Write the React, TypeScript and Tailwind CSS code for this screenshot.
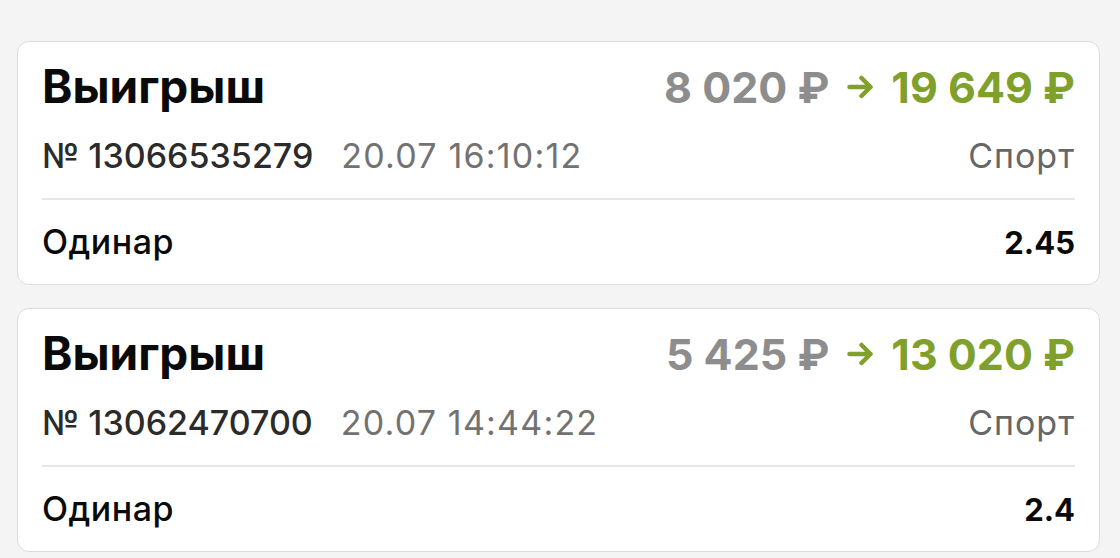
import React from 'react';

type Bet = {
  id: string;
  date: string;
  stake: string;
  win: string;
  kind: string;
  coef: string;
};

const bets: Bet[] = [
  { id: '13066535279', date: '20.07 16:10:12', stake: '8 020 ₽', win: '19 649 ₽', kind: 'Одинар', coef: '2.45' },
  { id: '13062470700', date: '20.07 14:44:22', stake: '5 425 ₽', win: '13 020 ₽', kind: 'Одинар', coef: '2.4' },
];

function Arrow() {
  return (
    <svg width="28" height="24" viewBox="0 0 28 24" fill="none" className="shrink-0">
      <path d="M2.5 12h21M14.5 3 23.5 12l-9 9" stroke="#7fa12c" strokeWidth="4.5" strokeLinecap="round" strokeLinejoin="round" />
    </svg>
  );
}

function BetCard({ bet }: { bet: Bet }) {
  return (
    <div className="rounded-[12px] border border-[#dcdcdc] bg-white px-[24px] pt-[20px] pb-[21px]">
      {/* header: status + amounts */}
      <div className="flex items-baseline justify-between">
        <span className="text-[46px] leading-[48px] font-bold text-[#0a0a0a]">Выигрыш</span>
        <div className="flex items-center text-[43px] leading-[48px] font-bold">
          <span className="text-[#8d8d8d]">{bet.stake}</span>
          <span className="ml-[18px] mr-[16px]">
            <Arrow />
          </span>
          <span className="text-[#7fa12c]">{bet.win}</span>
        </div>
      </div>

      {/* id + date + type */}
      <div className="mt-[25px] flex items-baseline justify-between text-[34px] leading-[40px]">
        <div className="flex items-baseline gap-[28px]">
          <span className="font-medium text-[#2b2b2b]">№ {bet.id}</span>
          <span className="tracking-[1.2px] text-[#727272]">{bet.date}</span>
        </div>
        <span className="tracking-[1px] text-[#666]">Спорт</span>
      </div>

      <div className="mt-[22px] h-[2px] bg-[#e7e7e7]" />

      <div className="mt-[22px] flex items-baseline justify-between leading-[40px] text-[#0a0a0a]">
        <span className="text-[34px] tracking-[0.5px] font-medium">{bet.kind}</span>
        <span className="text-[31px] font-bold">{bet.coef}</span>
      </div>
    </div>
  );
}

export default function App() {
  return (
    <div className="min-h-screen bg-[#f4f4f4] pl-[17px] pr-[20px] pt-[41px] font-['Inter','Noto_Sans',sans-serif]">
      <div className="flex flex-col gap-[23px]">
        {bets.map((b) => (
          <BetCard key={b.id} bet={b} />
        ))}
      </div>
    </div>
  );
}
